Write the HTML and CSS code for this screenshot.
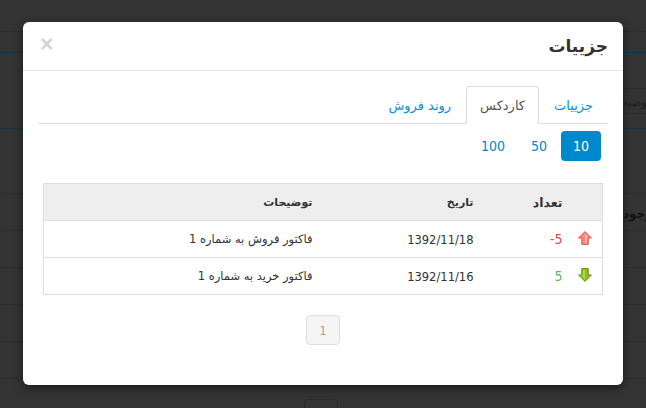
FILE: index.html
```html
<!DOCTYPE html>
<html lang="fa" dir="rtl">
<head>
<meta charset="utf-8">
<title>جزییات</title>
<link rel="stylesheet" href="styles.css">
</head>
<body>
<div class="backdrop">
  <div class="bg-row bg-r1"></div>
  <div class="bg-row bg-r2"></div>
  <div class="bg-row bg-r3"><span class="bg-input">توضیحات</span></div>
  <div class="bg-row bg-r4"></div>
  <div class="bg-row bg-r5"><span class="bg-head">موجودی</span></div>
  <div class="bg-row bg-r5"></div>
  <div class="bg-row bg-r5"></div>
  <div class="bg-row bg-r5"></div>
  <div class="bg-row bg-r5"></div>
  <div class="bg-row bg-r6"><span class="bg-btn"></span></div>
</div>
<div class="modal">
  <header class="modal-header">
    <h3 class="modal-title">جزییات</h3>
    <span class="close">×</span>
  </header>
  <div class="modal-body">
    <ul class="tabs">
      <li class="tab"><a>جزییات</a></li>
      <li class="tab active"><a>کاردکس</a></li>
      <li class="tab"><a>روند فروش</a></li>
    </ul>
    <ul class="pills">
      <li class="pill active">10</li>
      <li class="pill">50</li>
      <li class="pill">100</li>
    </ul>
    <table class="grid">
      <thead>
        <tr>
          <th class="c-icon"></th>
          <th class="c-qty">تعداد</th>
          <th class="c-date">تاریخ</th>
          <th class="c-desc">توضیحات</th>
        </tr>
      </thead>
      <tbody>
        <tr>
          <td class="c-icon">
            <svg class="arrow" viewBox="0 0 14 14" width="14" height="14"><path d="M7 .6 13.4 7H10.2v6.4H3.8V7H.6Z" fill="#fb8b78" stroke="#d9534a" stroke-width="1"/><path d="M7 2.6 10.2 6H9v6H7Z" fill="#fdb4a6"/></svg>
          </td>
          <td class="c-qty neg">-5</td>
          <td class="c-date">1392/11/18</td>
          <td class="c-desc">فاکتور فروش به شماره 1</td>
        </tr>
        <tr>
          <td class="c-icon">
            <svg class="arrow" viewBox="0 0 14 14" width="14" height="14"><path d="M7 13.4 .6 7H3.8V.6h6.4V7h3.2Z" fill="#8fc21c" stroke="#5f9000" stroke-width="1"/><path d="M5 2h2v9L3 7h2Z" fill="#add84a"/></svg>
          </td>
          <td class="c-qty pos">5</td>
          <td class="c-date">1392/11/16</td>
          <td class="c-desc">فاکتور خرید به شماره 1</td>
        </tr>
      </tbody>
    </table>
    <div class="pager"><span class="page">1</span></div>
  </div>
</div>
</body>
</html>
```
FILE: styles.css
```css
* { box-sizing: border-box; }
html, body { margin: 0; padding: 0; }
body {
  width: 646px;
  height: 408px;
  overflow: hidden;
  position: relative;
  background: #333;
  font-family: "DejaVu Sans", sans-serif;
  font-size: 11.5px;
  color: #333;
}
.backdrop { height: 408px; overflow: hidden; }
.bg-row { border-bottom: 1px solid #2c2c2c; }
.bg-r1 { height: 32px; }
.bg-r2 { height: 21px; border-bottom-color: #10344b; }
.bg-r3 { height: 76px; padding-top: 35px; border-bottom-color: #10344b; overflow: hidden; }
.bg-input {
  display: block; width: 60px; height: 26px; margin-right: -5px;
  border: 1px solid #2b2b2b; color: #1c1c1c; font-size: 11px; line-height: 28px;
  white-space: nowrap;
}
.bg-r4 { height: 65px; }
.bg-r5 { height: 37px; font-weight: bold; font-size: 12px; color: #111; }
.bg-head { display: block; margin-right: -14px; padding-top: 12px; line-height: 16px; white-space: nowrap; }
.bg-r6 { height: 30px; padding: 20px 308px 0 0; border: 0; }
.bg-btn { display: block; width: 34px; height: 20px; border: 1px solid #2a2a2a; border-radius: 4px; }

.modal {
  position: absolute;
  left: 23px;
  top: 22px;
  width: 600px;
  height: 363px;
  background: #fff;
  border-radius: 6px;
  box-shadow: 0 3px 9px rgba(0, 0, 0, .5);
}
.modal-header {
  height: 49px;
  padding: 0 15px 0 17px;
  border-bottom: 1px solid #e5e5e5;
  display: flex;
  justify-content: space-between;
  align-items: center;
}
.modal-title { margin: 0; font-size: 17px; font-weight: bold; line-height: 48px; color: #333; }
.close { font-size: 23px; font-weight: bold; color: #d4d4d4; line-height: 44px; height: 48px; font-family: "Liberation Sans", sans-serif; }
.modal-body { padding: 15px; }

.tabs {
  list-style: none;
  margin: 0;
  padding: 0;
  display: flex;
  height: 38px;
  border-bottom: 1px solid #ddd;
  font-size: 13px;
}
.tab a {
  display: block;
  height: 38px;
  padding: 0 12px;
  margin-right: 2px;
  line-height: 37px;
  color: #0a8fd8;
  border: 1px solid transparent;
  border-radius: 4px 4px 0 0;
  white-space: nowrap;
}
.tab.active a { padding: 0 13px; color: #555; background: #fff; border-color: #ddd; border-bottom-color: #fff; }

.pills {
  list-style: none;
  margin: 7px 7px 0 0;
  padding: 0;
  display: flex;
  gap: 2px;
  font-size: 14px;
  font-family: "DejaVu Sans Condensed", "DejaVu Sans", sans-serif;
}
.pill {
  height: 30px;
  padding: 0 12px;
  line-height: 31px;
  border-radius: 4px;
  color: #0088cc;
}
.pill.active { background: #0088cc; color: #fff; }

.grid {
  width: 560px;
  margin: 22px 5px 0 0;
  border-collapse: collapse;
  border: 1px solid #ddd;
  table-layout: fixed;
  font-size: 11.5px;
}
.grid th, .grid td { padding: 0 7px 0 8px; height: 37px; text-align: right; border-top: 1px solid #ddd; white-space: nowrap; }
.grid th { background: #eee; font-weight: bold; color: #333; font-size: 11px; }
.c-icon { width: 33px; padding: 0 !important; }
.c-qty { width: 89px; }
td.c-qty { font-family: "DejaVu Sans Condensed", "DejaVu Sans", sans-serif; font-size: 14px; }
th.c-qty { font-size: 12.5px; }
.c-date { width: 161px; }
td.c-date { font-family: "DejaVu Sans Condensed", "DejaVu Sans", sans-serif; font-size: 12.8px; }
.grid .neg { color: #d9534f; direction: ltr; }
.pos { color: #5cb85c; }
.arrow { display: block; margin: -3px 10px 0 0; }

.pager { display: flex; justify-content: center; margin-top: 20px; }
.page {
  width: 34px;
  height: 30px;
  display: block;
  text-align: center;
  line-height: 30px;
  font-size: 12px;
  font-family: "DejaVu Sans Condensed", "DejaVu Sans", sans-serif;
  color: #a89a8a;
  background: #f5f5f5;
  border: 1px solid #ddd;
  border-radius: 4px;
}
```
